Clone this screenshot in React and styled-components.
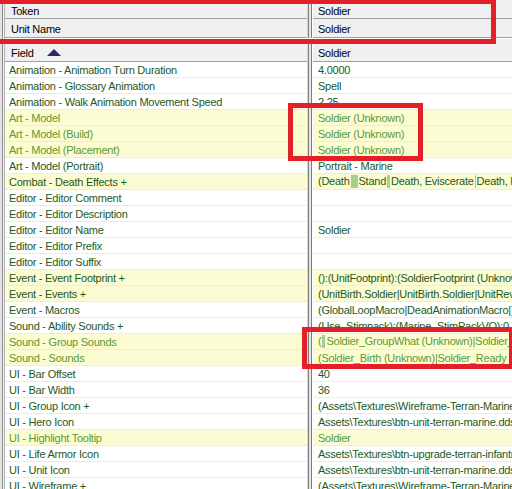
import React from 'react';
import styled, { createGlobalStyle } from 'styled-components';

const GlobalStyle = createGlobalStyle`
  html, body { margin: 0; padding: 0; background: #f0f0f0; }
  body { font-family: "Liberation Sans", Arial, sans-serif; }
`;

const Frame = styled.div`
  position: relative;
  width: 512px;
  height: 489px;
  overflow: hidden;
  display: flex;
  background: #f0f0f0;
  font-family: "Liberation Sans", Arial, sans-serif;
  font-size: 11px;
  letter-spacing: -0.25px;
`;

const EdgeStrip = styled.div`
  flex: 0 0 5px;
  background: linear-gradient(to right,
    #e3e3e3 0 2px, #8a8a8a 2px 3px, #f6f6f6 3px 4px, #b0b0b0 4px 5px);
`;

const Main = styled.div`
  flex: 1;
  min-width: 0;
  display: flex;
  flex-direction: column;
`;

const Row = styled.div`
  display: flex;
  height: ${p => p.$h}px;
  box-sizing: border-box;
  flex: 0 0 auto;
`;

const Cell = styled.div`
  box-sizing: border-box;
  display: flex;
  align-items: center;
  white-space: nowrap;
  overflow: hidden;
  padding-left: ${p => p.$pad}px;
  padding-top: ${p => p.$top || 0}px;
  border-bottom: 1px solid ${p => p.$line};
  background: ${p => p.$bg};
  color: ${p => p.$color};
`;

const FieldCell = styled(Cell)`
  flex: 0 0 302px;
`;

const ValueCell = styled(Cell)`
  flex: 1;
  min-width: 0;
`;

const ValueText = styled.span`
  flex: 0 0 auto;
  white-space: nowrap;
`;

const Divider = styled.div`
  flex: 0 0 6px;
  background: linear-gradient(to right,
    #d8d8d8 0 1px, #7c7c7c 1px 2px, #e6e6e6 2px 4px, #7c7c7c 4px 5px, #ffffff 5px 6px);
`;

const Splitter = styled.div`
  flex: 0 0 6px;
  background: #f0f0f0;
  border-top: 1px solid #ffffff;
  box-sizing: border-box;
`;

const SortArrow = styled.span`
  display: inline-block;
  flex: 0 0 auto;
  width: 0;
  height: 0;
  margin-left: 13px;
  margin-top: -2px;
  border-left: 7px solid transparent;
  border-right: 7px solid transparent;
  border-bottom: 7px solid #28286c;
`;

const Block = styled.span`
  display: inline-block;
  width: ${p => p.$w}px;
  height: 13px;
  background: #a9cf8f;
  margin: 0 1px;
  vertical-align: -3px;
`;

const Highlight = styled.div`
  position: absolute;
  box-sizing: border-box;
  border: 5px solid #e41f27;
  pointer-events: none;
`;

const DARK = '#1d5a1d';
const LITE = '#5a9a32';
const YELLOW = '#fcfcd2';
const WHITE = '#ffffff';

const rows = [
  ['Animation - Animation Turn Duration', ['4.0000'], 'plain'],
  ['Animation - Glossary Animation', ['Spell'], 'plain'],
  ['Animation - Walk Animation Movement Speed', ['2.25'], 'plain'],
  ['Art - Model', ['Soldier (Unknown)'], 'lite'],
  ['Art - Model (Build)', ['Soldier (Unknown)'], 'lite'],
  ['Art - Model (Placement)', ['Soldier (Unknown)'], 'lite'],
  ['Art - Model (Portrait)', ['Portrait - Marine'], 'plain'],
  ['Combat - Death Effects +', ['(Death', { w: 7 }, 'Stand', { w: 3 }, 'Death, Eviscerate', { w: 1 }, 'Death, Eviscerate'], 'mod'],
  ['Editor - Editor Comment', [''], 'plain'],
  ['Editor - Editor Description', [''], 'plain'],
  ['Editor - Editor Name', ['Soldier'], 'plain'],
  ['Editor - Editor Prefix', [''], 'plain'],
  ['Editor - Editor Suffix', [''], 'plain'],
  ['Event - Event Footprint +', ['():(UnitFootprint):(SoldierFootprint (Unknown))'], 'mod'],
  ['Event - Events +', ['(UnitBirth.Soldier|UnitBirth.Soldier|UnitRevive.Soldier)'], 'mod'],
  ['Event - Macros', ['(GlobalLoopMacro|DeadAnimationMacro|)'], 'plain'],
  ['Sound - Ability Sounds +', ['(Use_Stimpack):(Marine_StimPackVO):0'], 'plain'],
  ['Sound - Group Sounds', ['(', { w: 3 }, 'Soldier_GroupWhat (Unknown)|Soldier_GroupYes (Unknown)'], 'lite'],
  ['Sound - Sounds', ['(Soldier_Birth (Unknown)|Soldier_Ready (Unknown))'], 'lite'],
  ['UI - Bar Offset', ['40'], 'plain'],
  ['UI - Bar Width', ['36'], 'plain'],
  ['UI - Group Icon +', ['(Assets\\Textures\\Wireframe-Terran-Marine.dds)'], 'plain'],
  ['UI - Hero Icon', ['Assets\\Textures\\btn-unit-terran-marine.dds'], 'plain'],
  ['UI - Highlight Tooltip', ['Soldier'], 'lite'],
  ['UI - Life Armor Icon', ['Assets\\Textures\\btn-upgrade-terran-infantryarmorlevel0.dds'], 'plain'],
  ['UI - Unit Icon', ['Assets\\Textures\\btn-unit-terran-marine.dds'], 'plain'],
  ['UI - Wireframe +', ['(Assets\\Textures\\Wireframe-Terran-Marine.dds)'], 'plain'],
];

function DataRow({ field, value, kind }) {
  const bg = kind === 'plain' ? WHITE : YELLOW;
  const color = kind === 'lite' ? LITE : DARK;
  return (
    <Row $h={16}>
      <FieldCell $pad={4} $bg={bg} $color={color} $line="#ebebeb">{field}</FieldCell>
      <Divider />
      <ValueCell $pad={5} $bg={bg} $color={color} $line="#ebebeb">
        <ValueText>
          {value.map((s, i) => (typeof s === 'string' ? <React.Fragment key={i}>{s}</React.Fragment> : <Block key={i} $w={s.w} />))}
        </ValueText>
      </ValueCell>
    </Row>
  );
}

function HeaderRow({ h, top, label, value, children }) {
  return (
    <Row $h={h}>
      <FieldCell $pad={6} $top={top} $bg="#f0f0f0" $color="#000" $line="#a0a0a0">
        {label}{children}
      </FieldCell>
      <Divider />
      <ValueCell $pad={5} $top={top} $bg="#f0f0f0" $color="#000" $line="#a0a0a0">{value}</ValueCell>
    </Row>
  );
}

export default function App() {
  return (
    <>
      <GlobalStyle />
      <Frame>
        <EdgeStrip />
        <Main>
          <HeaderRow h={19} top={3} label="Token" value="Soldier" />
          <HeaderRow h={19} top={1} label="Unit Name" value="Soldier" />
          <Splitter />
          <HeaderRow h={18} top={1} label="Field" value="Soldier">
            <SortArrow />
          </HeaderRow>
          {rows.map(([f, v, k]) => (
            <DataRow key={f} field={f} value={v} kind={k} />
          ))}
        </Main>
        <Highlight style={{ left: -5, top: -1, width: 501, height: 45 }} />
        <Highlight style={{ left: 288, top: 103, width: 135, height: 58 }} />
        <Highlight style={{ left: 302, top: 327, width: 212, height: 42 }} />
      </Frame>
    </>
  );
}
